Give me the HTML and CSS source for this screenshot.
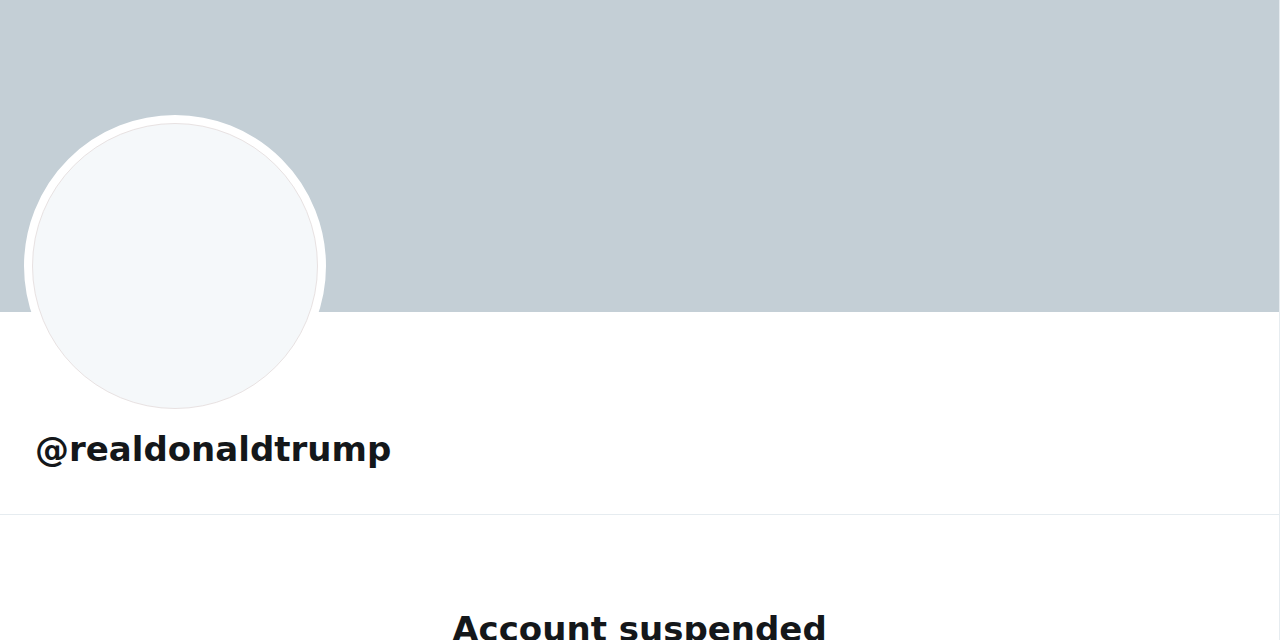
FILE: index.html
```html
<!DOCTYPE html>
<html lang="en">
<head>
    <meta charset="UTF-8">
    <meta name="viewport" content="width=device-width, initial-scale=1.0">
    <title>@realdonaldtrump</title>
    <link rel="stylesheet" href="styles.css">
</head>
<body>
    <div class="profile">
        <div class="banner"></div>
        <div class="profile-info">
            <div class="avatar">
                <div class="avatar-inner"></div>
            </div>
            <p class="handle">@realdonaldtrump</p>
        </div>
        <div class="suspended">
            <h2>Account suspended</h2>
        </div>
    </div>
</body>
</html>
```

FILE: styles.css
```css
body {
    font-family: "DejaVu Sans", Verdana, sans-serif;
    margin: 0;
    padding: 0;
    background-color: white;
    color: #14171a;
    overflow: hidden;
}
.profile {
    width: 1279px;
    border-right: 1px solid #e6ecf0;
    min-height: 640px;
}
.banner {
    height: 312px;
    background-color: #c4cfd6;
}
.profile-info {
    display: flow-root;
    padding: 0 0 0 24px;
    border-bottom: 1px solid #e6ecf0;
    height: 202px;
}
.avatar {
    width: 286px;
    height: 286px;
    margin-top: -197px;
    border-radius: 50%;
    background-color: white;
    border: 8px solid white;
}
.avatar-inner {
    width: 284px;
    height: 284px;
    border-radius: 50%;
    background-color: #f5f8fa;
    border: 1px solid #e8e2e2;
}
.handle {
    margin: 12px 0 0 11px;
    font-size: 34px;
    font-weight: 700;
    line-height: 40px;
}
.suspended {
    text-align: center;
    padding-top: 94px;
}
.suspended h2 {
    margin: 0;
    font-size: 34px;
    font-weight: 700;
    line-height: 40px;
}
```
